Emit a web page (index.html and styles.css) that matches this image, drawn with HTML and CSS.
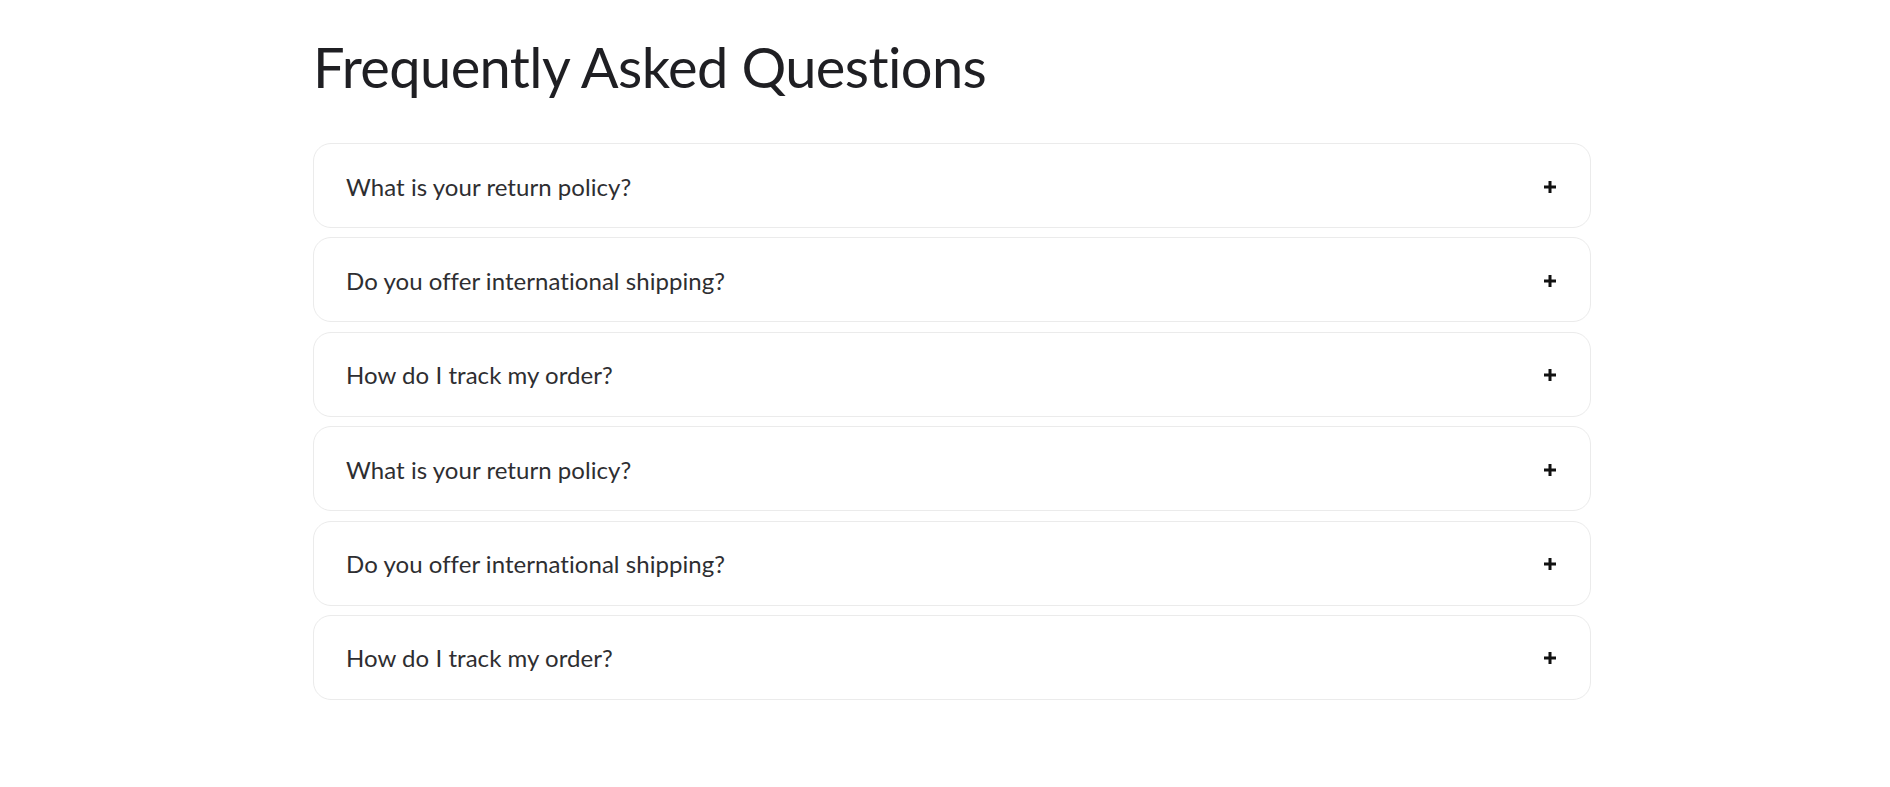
FILE: index.html
```html
<!DOCTYPE html>
<html lang="en">
<head>
<meta charset="utf-8">
<title>FAQ</title>
<link rel="stylesheet" href="styles.css">
</head>
<body>
<main class="page">
  <section class="faq">
    <h1 class="faq-title">Frequently Asked Questions</h1>
    <div class="faq-list">
      <div class="faq-item"><span class="faq-q">What is your return policy?</span><svg class="faq-icon" viewBox="0 0 14 14"><path d="M7 1v12M1 7h12"/></svg></div>
      <div class="faq-item"><span class="faq-q">Do you offer international shipping?</span><svg class="faq-icon" viewBox="0 0 14 14"><path d="M7 1v12M1 7h12"/></svg></div>
      <div class="faq-item"><span class="faq-q">How do I track my order?</span><svg class="faq-icon" viewBox="0 0 14 14"><path d="M7 1v12M1 7h12"/></svg></div>
      <div class="faq-item"><span class="faq-q">What is your return policy?</span><svg class="faq-icon" viewBox="0 0 14 14"><path d="M7 1v12M1 7h12"/></svg></div>
      <div class="faq-item"><span class="faq-q">Do you offer international shipping?</span><svg class="faq-icon" viewBox="0 0 14 14"><path d="M7 1v12M1 7h12"/></svg></div>
      <div class="faq-item"><span class="faq-q">How do I track my order?</span><svg class="faq-icon" viewBox="0 0 14 14"><path d="M7 1v12M1 7h12"/></svg></div>
    </div>
  </section>
</main>
</body>
</html>
```
FILE: styles.css
```css
html, body {
  margin: 0;
  padding: 0;
  background: #ffffff;
}
body {
  font-family: Lato, "Noto Sans", sans-serif;
  color: #222226;
}
.page {
  display: flex;
  justify-content: center;
  padding: 33px 0 0 14px;
}
.faq {
  width: 1278px;
}
.faq-title {
  margin: 0 0 43px 0;
  font-size: 56px;
  font-weight: 400;
  line-height: 67px;
  color: #1f1f23;
  letter-spacing: -0.6px;
}
.faq-list {
  display: flex;
  flex-direction: column;
  gap: 9.4px;
}
.faq-item {
  box-sizing: border-box;
  height: 85px;
  border: 1px solid #ebebeb;
  border-radius: 18px;
  padding: 0 33px 0 32px;
  display: flex;
  align-items: center;
  justify-content: space-between;
}
.faq-q {
  font-size: 24px;
  letter-spacing: 0.05px;
  color: #2e2e31;
  padding-top: 1px;
}
.faq-icon {
  width: 14px;
  height: 14px;
  fill: none;
  stroke: #111;
  stroke-width: 3;
  margin-top: 2px;
}
```
